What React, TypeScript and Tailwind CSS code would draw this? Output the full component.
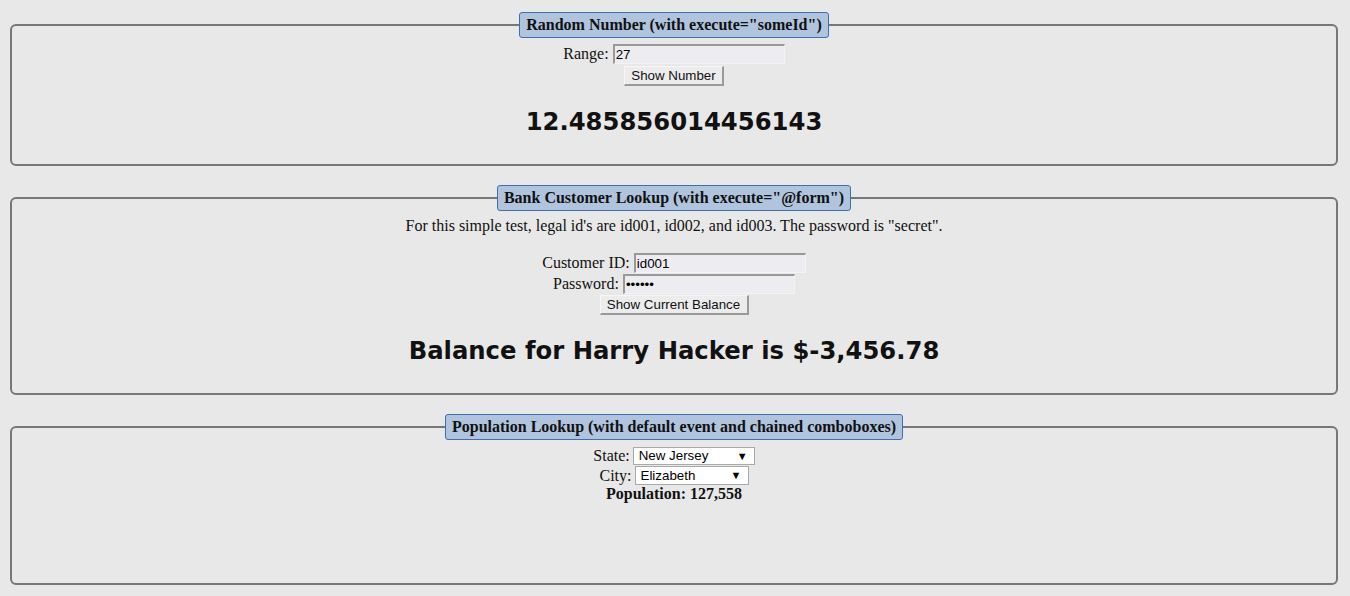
import type { ReactNode } from 'react'

const SERIF = "font-['Liberation_Serif','Times_New_Roman',serif]"
const SANS = "font-['Liberation_Sans',Arial,sans-serif]"
const BIG = "font-['DejaVu_Sans',Verdana,sans-serif]"

function Panel({ title, height, children }: { title: string; height: string; children: ReactNode }) {
  return (
    <fieldset
      className={`ml-[10px] mr-[12px] border-2 border-[#777777] rounded-[6px] px-2 ${height} ${SERIF}`}
    >
      <legend className="mx-auto h-[26px] px-[6px] flex items-center bg-[#b0c4de] border border-[#3f6fb0] rounded-[3px] text-[16px] font-bold text-[#111]">
        {title}
      </legend>
      {children}
    </fieldset>
  )
}

function TextInput({ value, width, type = 'text' }: { value: string; width: string; type?: string }) {
  return (
    <input
      type={type}
      defaultValue={value}
      className={`${width} h-[20px] ${SANS} text-[13.33px] text-black bg-[#ededf1] border-t-2 border-l-2 border-b border-r border-t-[#999] border-l-[#999] border-b-[#f3f3f3] border-r-[#f3f3f3] px-[1px] outline-none`}
    />
  )
}

function Button({ label, width }: { label: string; width: string }) {
  return (
    <button
      className={`${width} h-[20px] ${SANS} text-[13.33px] text-[#111] bg-[#ececec] border-t border-l border-b-2 border-r-2 border-t-[#f6f6f6] border-l-[#f6f6f6] border-b-[#9a9a9a] border-r-[#9a9a9a] flex items-center justify-center`}
    >
      {label}
    </button>
  )
}

function Combo({ value, width, height }: { value: string; width: string; height: string }) {
  return (
    <div className={`relative ${width} ${height}`}>
      <select
        defaultValue={value}
        className={`block w-full h-full appearance-none bg-white border border-[#a9a9a9] pl-[5px] py-0 leading-[16px] ${SANS} text-[13.33px] text-black outline-none`}
      >
        <option>{value}</option>
      </select>
      <span className="absolute right-[7px] top-0 h-full flex items-center text-[11px] leading-none text-black pointer-events-none">
        ▼
      </span>
    </div>
  )
}

export default function App() {
  return (
    <div className="min-h-[596px] bg-[#e8e8e8] pt-[12px] text-[16px] text-[#111]">
      <Panel title={'Random Number (with execute="someId")'} height="h-[154px]">
        <div className="flex flex-col items-center">
          <div className="mt-[6px] h-[20px] flex items-center gap-[4px]">
            <span>Range:</span>
            <TextInput value="27" width="w-[172px]" />
          </div>
          <div className="mt-[2px]">
            <Button label="Show Number" width="w-[100px]" />
          </div>
          <h2 className={`mt-[22px] h-[28px] leading-[28px] text-[24.3px] font-bold text-[#111] ${BIG}`}>
            12.485856014456143
          </h2>
        </div>
      </Panel>

      <div className="h-[19px]" />

      <Panel title={'Bank Customer Lookup (with execute="@form")'} height="h-[210px]">
        <div className="flex flex-col items-center">
          <p className="mt-[6px] h-[18px] leading-[18px]">
            For this simple test, legal id's are id001, id002, and id003. The password is "secret".
          </p>
          <div className="mt-[18px] h-[20px] flex items-center gap-[4px]">
            <span>Customer ID:</span>
            <TextInput value="id001" width="w-[172px]" />
          </div>
          <div className="mt-[1px] h-[20px] flex items-center gap-[4px]">
            <span>Password:</span>
            <TextInput value="secret" type="password" width="w-[172px]" />
          </div>
          <div className="mt-[1px]">
            <Button label="Show Current Balance" width="w-[149px]" />
          </div>
          <h2 className={`mt-[22px] h-[28px] leading-[28px] text-[24.3px] font-bold text-[#111] ${BIG}`}>
            Balance for Harry Hacker is $-3,456.78
          </h2>
        </div>
      </Panel>

      <div className="h-[19px]" />

      <Panel title="Population Lookup (with default event and chained comboboxes)" height="h-[171px]">
        <div className="flex flex-col items-center">
          <div className="mt-[7px] h-[18px] flex items-center gap-[3px]">
            <span>State:</span>
            <Combo value="New Jersey" width="w-[122px]" height="h-[18px]" />
          </div>
          <div className="mt-[1px] h-[19px] flex items-center gap-[3px]">
            <span>City:</span>
            <Combo value="Elizabeth" width="w-[114px]" height="h-[19px]" />
          </div>
          <p className="h-[18px] leading-[18px] font-bold">Population: 127,558</p>
        </div>
      </Panel>
    </div>
  )
}
